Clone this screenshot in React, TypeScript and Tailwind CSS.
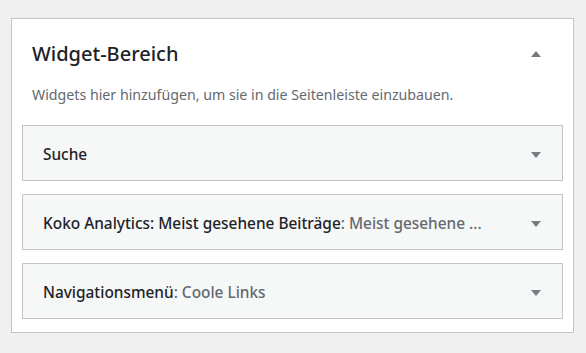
import React from "react";

const Down = () => (
  <svg width="10" height="6" viewBox="0 0 10 6" className="shrink-0">
    <path d="M0 0 H10 L5 6 Z" fill="#787c82" />
  </svg>
);
const Up = () => (
  <svg width="10" height="6" viewBox="0 0 10 6" className="shrink-0">
    <path d="M0 6 H10 L5 0 Z" fill="#787c82" />
  </svg>
);

const widgets: { title: string; sub?: string }[] = [
  { title: "Suche" },
  { title: "Koko Analytics: Meist gesehene Beiträge", sub: "Meist gesehene ..." },
  { title: "Navigationsmenü", sub: "Coole Links" },
];

export default function App() {
  return (
    <div
      className="w-[586px] h-[353px] bg-[#f0f0f1] pt-[18px] pl-[11px]"
      style={{ fontFamily: '"Noto Sans", "Open Sans", sans-serif' }}
    >
      <div className="w-[563px] bg-white border border-[#c3c4c7] px-[10px] pb-[13px]">
        <div className="flex items-center justify-between pt-[21px] pl-[10px] pr-[22px]">
          <div className="text-[20px] leading-[28px] font-medium text-[#1d2327]">Widget-Bereich</div>
          <Up />
        </div>
        <div className="pl-[10px] mt-[17px] text-[14.2px] leading-[20px] text-[#646970]">
          Widgets hier hinzufügen, um sie in die Seitenleiste einzubauen.
        </div>
        <div className="mt-[20px] flex flex-col gap-[13px]">
          {widgets.map((w) => (
            <div
              key={w.title}
              className="h-[56px] bg-[#f6f7f7] border border-[#c3c4c7] flex items-center justify-between pl-[20px] pr-[21px] pt-[3px]"
            >
              <div className="text-[15.4px] leading-[20px] text-[#1d2327] whitespace-nowrap font-medium">
                <span>{w.title}</span>
                {w.sub && <span className="text-[#646970]">: {w.sub}</span>}
              </div>
              <Down />
            </div>
          ))}
        </div>
      </div>
    </div>
  );
}
